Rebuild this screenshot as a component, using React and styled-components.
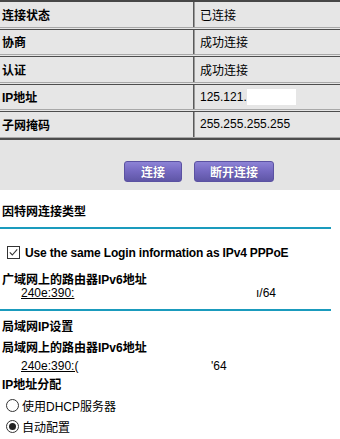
import React from "react";
import styled, { createGlobalStyle } from "styled-components";

const Global = createGlobalStyle`
  html, body { margin: 0; padding: 0; background: #ffffff; }
  body {
    font-family: "Liberation Sans", "Noto Sans CJK SC", sans-serif;
    font-size: 12px;
    color: #000;
  }
`;

const Page = styled.div`
  width: 340px;
  height: 439px;
  overflow: hidden;
  background: #fff;
`;

const Table = styled.div`
  background: #e6e6e6;
  border-top: 2px solid #474747;
`;

const Row = styled.div`
  display: grid;
  grid-template-columns: 193px 1fr;
  height: 24.5px;
  border-top: ${(p) => (p.$first ? "none" : "1px solid #4d4d4d")};
  border-bottom: 1px solid #a8a8a8;
  margin-bottom: 1px;
  &:last-child {
    box-shadow: 0 2px 0 #4d4d4d;
    margin-bottom: 2px;
  }
`;

const Label = styled.div`
  display: flex;
  align-items: center;
  padding-left: 2px;
  font-weight: bold;
  font-size: 12px;
`;

const Value = styled.div`
  display: flex;
  align-items: center;
  padding-left: 6px;
  font-size: 12px;
  border-left: 1px solid #5a5a5a;
  box-shadow: inset 1px 0 0 #9a9a9a;
`;

const Redact = styled.span`
  display: inline-block;
  width: 49px;
  height: 16px;
  background: #fff;
`;

const ButtonBar = styled.div`
  background: #e4e4e4;
  height: 50px;
  display: flex;
  align-items: flex-start;
  gap: 12px;
  padding-left: 124px;
  padding-top: 21px;
  box-sizing: border-box;
`;

const Button = styled.button`
  width: ${(p) => p.$w}px;
  height: 21px;
  padding: 0;
  border: 1px solid #5b52a2;
  border-radius: 3px;
  background: linear-gradient(to bottom, #8d83d6 0%, #7468c0 50%, #5f56a6 100%);
  color: #fff;
  font-family: "Liberation Sans", "Noto Sans CJK SC", sans-serif;
  font-weight: bold;
  font-size: 12px;
  text-shadow: 0 0 1px rgba(40, 30, 90, 0.6);
  cursor: pointer;
`;

const Section = styled.div`
  padding-top: 14px;
`;

const Heading = styled.div`
  font-weight: bold;
  font-size: 12px;
  line-height: ${(p) => p.$lh || 14}px;
  padding-left: 2px;
  margin-top: ${(p) => p.$mt || 0}px;
`;

const Rule = styled.div`
  width: 331px;
  height: 2px;
  background: #1a9bbd;
  margin-top: ${(p) => p.$mt}px;
`;

const CheckRow = styled.label`
  display: flex;
  align-items: center;
  gap: 5px;
  height: 16px;
  margin-top: 16px;
  padding-left: 7px;
  font-weight: bold;
  font-size: 12px;
  letter-spacing: -0.15px;
`;

const AddressRow = styled.div`
  display: flex;
  height: 13px;
  line-height: 13px;
  padding-left: 21px;
  margin-top: ${(p) => p.$mt || 0}px;
  font-size: 12px;
`;

const Link = styled.span`
  text-decoration: underline;
  width: ${(p) => p.$w}px;
  white-space: nowrap;
`;

const Suffix = styled.span`
  white-space: nowrap;
`;

const RadioRow = styled.label`
  display: flex;
  align-items: center;
  gap: 3px;
  height: 16px;
  padding-left: 6px;
  margin-top: ${(p) => p.$mt}px;
  font-size: 12px;
`;

const CheckIcon = () => (
  <svg width="13" height="13" viewBox="0 0 13 13">
    <rect x="0.5" y="0.5" width="12" height="12" fill="#fff" stroke="#333" />
    <path d="M2.8 6.4 L5.3 9 L10.2 3.4" fill="none" stroke="#333" strokeWidth="1.1" />
  </svg>
);

const RadioIcon = ({ checked }) => (
  <svg width="13" height="13" viewBox="0 0 13 13">
    <circle cx="6.5" cy="6.5" r="6" fill="#fff" stroke="#333" />
    {checked && <circle cx="6.5" cy="6.5" r="3.5" fill="#222" />}
  </svg>
);

const rows = [
  ["连接状态", "已连接"],
  ["协商", "成功连接"],
  ["认证", "成功连接"],
  ["IP地址", "125.121."],
  ["子网掩码", "255.255.255.255"],
];

export default function App() {
  return (
    <Page>
      <Global />
      <Table>
        {rows.map(([k, v], i) => (
          <Row key={k} $first={i === 0}>
            <Label>{k}</Label>
            <Value>
              {v}
              {i === 3 && <Redact />}
            </Value>
          </Row>
        ))}
      </Table>
      <ButtonBar>
        <Button $w={58}>连接</Button>
        <Button $w={80}>断开连接</Button>
      </ButtonBar>
      <Section>
        <Heading $lh={16}>因特网连接类型</Heading>
        <Rule $mt={7} />
        <CheckRow>
          <CheckIcon />
          Use the same Login information as IPv4 PPPoE
        </CheckRow>
        <Heading $lh={13} $mt={13}>广域网上的路由器IPv6地址</Heading>
        <AddressRow>
          <Link $w={235}>240e:390:</Link>
          <Suffix>ı/64</Suffix>
        </AddressRow>
        <Rule $mt={9} />
        <Heading $mt={9}>局域网IP设置</Heading>
        <Heading $mt={7}>局域网上的路由器IPv6地址</Heading>
        <AddressRow $mt={5}>
          <Link $w={190}>240e:390:(</Link>
          <Suffix>'64</Suffix>
        </AddressRow>
        <Heading $mt={5}>IP地址分配</Heading>
        <RadioRow $mt={6}>
          <RadioIcon />
          使用DHCP服务器
        </RadioRow>
        <RadioRow $mt={5}>
          <RadioIcon checked />
          自动配置
        </RadioRow>
      </Section>
    </Page>
  );
}
